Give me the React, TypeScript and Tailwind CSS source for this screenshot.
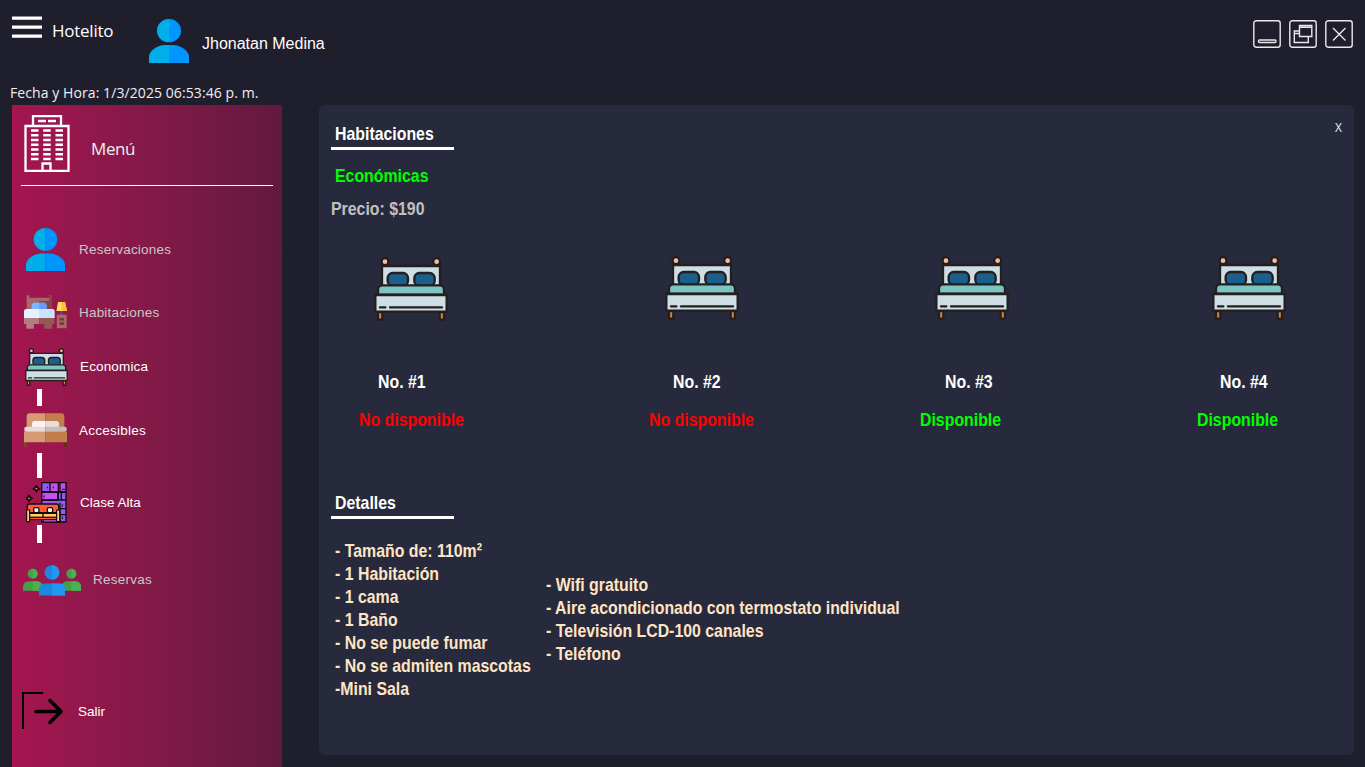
import type { ReactNode } from "react";

const narrow = "w-max origin-left scale-x-[0.835] font-['Liberation_Sans',Arial,sans-serif] font-bold text-[19px] leading-[23px] whitespace-pre";

function UserIcon({ className }: { className: string }) {
  return (
    <svg viewBox="0 0 116 132" preserveAspectRatio="none" className={className}>
      <path d="M58 0a35 35 0 0 0 0 70z" fill="#00aeea" />
      <path d="M58 0a35 35 0 0 1 0 70z" fill="#0095ff" />
      <path d="M58 78H46C24 78 0 96 0 113v19h58z" fill="#00aeea" />
      <path d="M58 78h12c22 0 46 18 46 35v19H58z" fill="#0095ff" />
    </svg>
  );
}

function BedIcon({ className }: { className: string }) {
  return (
    <svg viewBox="0 0 222 192" preserveAspectRatio="none" className={className}>
      <g stroke="#231f20" strokeWidth="7">
        <path d="M24 88V27h174v61z" fill="#cfdde5" />
        <circle cx="33" cy="14" r="10.500" fill="#f9b99a" />
        <circle cx="188" cy="14" r="10.500" fill="#f9b99a" />
        <rect x="41" y="48" width="61" height="39" rx="15" fill="#1b5f8c" />
        <rect x="121" y="48" width="61" height="39" rx="15" fill="#1b5f8c" />
        <path d="M12 113V98q0-13 13-13h172q13 0 13 13v15z" fill="#7cc5c3" />
        <path d="M12 165h13v23H12zM197 165h13v23h-13z" fill="#d9853b" />
        <path d="M4 114h214v50H4z" fill="#cfdde5" />
        <path d="M18 151h16M48 151h156" strokeLinecap="round" />
      </g>
    </svg>
  );
}

function BuildingIcon() {
  return (
    <svg viewBox="0 0 46 57" className="h-[57px] w-[46px]" fill="none" stroke="#fff" strokeWidth="2.300">
      <path d="M9 11V1.200h28V11M1.500 11h43v45h-43zM18.500 56v-7.500h8V56" />
      <path d="M14 6h8M24 6h8" />
      {[15.5, 20.2, 25, 29.7, 34.5, 39.2, 44].map((y) => (
        <path key={y} d={`M7 ${y}h7.500M19.200 ${y}h7.500M31.500 ${y}h7.500`} strokeWidth="2.600" />
      ))}
    </svg>
  );
}

function BedroomIcon() {
  return (
    <svg viewBox="0 0 130 102" className="h-[34px] w-[43px]">
      <path d="M8 0h8v10h60V0h7v50H8z" fill="#a56a6a" />
      <path d="M46 16h30V0h7v50H46z" fill="#824444" />
      <path d="M16 8h60v9H16z" fill="#a56a6a" />
      <path d="M23 42V32q0-9 9-9h27q9 0 9 9v10z" fill="#80b5ff" />
      <path d="M46 23h13q9 0 9 9v10H46z" fill="#639cff" />
      <path d="M0 69V48q0-6 7-6h78q7 0 7 6v21z" fill="#e6f1ff" />
      <path d="M46 42h39q7 0 7 6v21H46z" fill="#cbe2ff" />
      <path d="M0 69h46v18H30v15H7V87H0z" fill="#b47d7d" />
      <path d="M46 69h46v18h-7v15H61V87H46z" fill="#965757" />
      <path d="M103 21h21l6 27H98z" fill="#ffe05c" />
      <path d="M114 21h10l6 27h-16z" fill="#fdbf3c" />
      <path d="M111 48h6v12h-6z" fill="#435b91" />
      <path d="M99 59h30v41H99z" fill="#a56a6a" />
      <path d="M107 69h14v8h-14zM107 82h14v8h-14z" fill="#763c3c" />
    </svg>
  );
}

function WoodBedIcon() {
  return (
    <svg viewBox="0 0 130 102" className="h-[34px] w-[43px]">
      <path d="M0 86h8v16H0z" fill="#7c4824" />
      <path d="M122 86h8v16h-8z" fill="#5e3015" />
      <path d="M8 42V10Q8 0 18 0h47v42z" fill="#d49b74" />
      <path d="M65 0h47q10 0 10 10v32H65z" fill="#c27f4b" />
      <path d="M24 42V32q0-8 8-8h33v18z" fill="#fff3f0" />
      <path d="M65 24h33q8 0 8 8v10H65z" fill="#ebdcd9" />
      <path d="M0 55h65v33H0z" fill="#d49b74" />
      <path d="M65 55h65v33H65z" fill="#c27f4b" />
      <path d="M65 41H8a7 7 0 0 0 0 15h57z" fill="#e8dcda" />
      <path d="M65 41h57a7 7 0 0 1 0 15H65z" fill="#c9bdbb" />
    </svg>
  );
}

function SofaIcon() {
  return (
    <svg viewBox="0 0 123 123" className="h-[41px] w-[41px]">
      <g stroke="#120b14" strokeWidth="4" strokeLinejoin="round">
        <path d="M47 2h73v118H47z" fill="#8d5cf0" />
        <path d="M47 30h48v24H47z" fill="#c84ff0" />
        <path d="M72 2h25v28H72zM102 2h18v28h-18z" fill="#c84ff0" />
        <path d="M47 30h73M47 54h73M97 30v24M106 30v24M102 80h18M102 98h18M102 62v58" fill="none" />
        <path d="M64 14v5M82 14v5M108 22h9M54 40v7M109 67v7M109 104v7" strokeWidth="3" />
        <path d="M52 112h50v8H52z" fill="#c84ff0" strokeWidth="3" />
        <path d="M4 72q0-6 6-6h82q6 0 6 6v20H4z" fill="#ff5b35" />
        <path d="M10 94h82v12H10z" fill="#ffd066" />
        <path d="M10 106h82v7H10z" fill="#ff5b35" strokeWidth="3" />
        <path d="M2 84h9v35H2zM92 84h9v35h-9z" fill="#ffd27b" strokeWidth="3.500" />
        <path d="M51 94v12" />
        <rect x="23" y="77" width="16" height="15" rx="5" fill="#fff0e6" />
        <rect x="64" y="77" width="16" height="15" rx="5" fill="#fff0e6" />
        <path d="M31 11l3 6 6 3-6 3-3 6-3-6-6-3 6-3zM9 40l3 6 6 3-6 3-3 6-3-6-6-3 6-3z" fill="#ffce55" strokeWidth="5" />
      </g>
    </svg>
  );
}

function GroupIcon() {
  return (
    <svg viewBox="0 0 174 92" className="h-[31px] w-[58px]">
      <circle cx="29" cy="26" r="15" fill="#43a047" />
      <path d="M29 11a15 15 0 0 1 0 30z" fill="#4caf50" />
      <path d="M0 77V66q0-18 18-18h22q14 0 18 12v17z" fill="#43a047" />
      <path d="M29 48h11q14 0 18 12v17H29z" fill="#4caf50" />
      <circle cx="145" cy="26" r="15" fill="#43a047" />
      <path d="M145 11a15 15 0 0 1 0 30z" fill="#4caf50" />
      <path d="M116 77V60q4-12 18-12h22q18 0 18 18v11z" fill="#43a047" />
      <path d="M145 48h11q18 0 18 18v11h-29z" fill="#4caf50" />
      <circle cx="87" cy="22" r="22" fill="#1e88dc" />
      <path d="M87 0a22 22 0 0 1 0 44z" fill="#2196f3" />
      <path d="M48 91V73q0-18 18-18h42q18 0 18 18v18z" fill="#1e88dc" />
      <path d="M87 55h21q18 0 18 18v18H87z" fill="#2196f3" />
    </svg>
  );
}

function ExitIcon() {
  return (
    <svg viewBox="0 0 41 37" className="h-[37px] w-[41px]" fill="none" stroke="#000">
      <path d="M1 37V1h20" strokeWidth="2" />
      <path d="M14 19.500h25M28 8.500l11 11-11 11" strokeWidth="3.600" strokeLinecap="round" strokeLinejoin="round" />
    </svg>
  );
}

function WindowButton({ children }: { children: ReactNode }) {
  return (
    <button className="h-7 w-7">
      <svg viewBox="0 0 28 28" className="h-7 w-7" fill="none" stroke="#e8e8ec" strokeWidth="1.400">
        <rect x="0.800" y="0.800" width="26.400" height="26.400" rx="2.500" />
        {children}
      </svg>
    </button>
  );
}

function MenuItem({ icon, label, row, text }: { icon: ReactNode; label: string; row: string; text: string }) {
  return (
    <div className={`flex shrink-0 items-center ${row}`}>
      {icon}
      <span className={`font-['Liberation_Sans',sans-serif] text-[13.500px] leading-4 ${text}`}>{label}</span>
    </div>
  );
}

function Connector({ className }: { className: string }) {
  return <div className={`ml-[25px] w-[5px] shrink-0 bg-white ${className}`} />;
}

const rooms = [
  { name: "No. #1", free: false, col: "w-[290px]", bed: "ml-[15px] mt-px w-[74px]", label: "ml-[19px]" },
  { name: "No. #2", free: false, col: "w-[271px]", bed: "ml-[16px] w-[74px]", label: "ml-[24px]" },
  { name: "No. #3", free: true, col: "w-[277px]", bed: "ml-[15px] w-[74px]", label: "ml-[25px]" },
  { name: "No. #4", free: true, col: "w-[120px]", bed: "ml-[15px] w-[74px]", label: "ml-[23px]" },
];

const details = ["- Tamaño de: 110m²", "- 1 Habitación", "- 1 cama", "- 1 Baño", "- No se puede fumar", "- No se admiten mascotas", "-Mini Sala"];
const services = ["- Wifi gratuito", "- Aire acondicionado con termostato individual", "- Televisión LCD-100 canales", "- Teléfono"];

function Sidebar() {
  return (
    <aside className="ml-3 flex h-[662px] w-[270px] shrink-0 flex-col bg-linear-to-r from-[#a51550] to-[#63193e]">
      <div className="flex h-20 shrink-0 pl-3 pt-[10px]">
        <BuildingIcon />
        <span className="ml-[21px] mt-[22px] font-['Open_Sans',sans-serif] text-[17px] leading-6 tracking-[-0.4px] text-[#eee]">Menú</span>
      </div>
      <div className="ml-[9px] h-px w-[252px] shrink-0 bg-white" />
      <MenuItem icon={<UserIcon className="h-[43px] w-[39px]" />} label="Reservaciones" row="mt-[42px] h-[43px] pl-[14px]" text="ml-[14px] tracking-[0.23px] text-[#c8c8c8]" />
      <MenuItem icon={<BedroomIcon />} label="Habitaciones" row="mt-6 h-[34px] pl-3" text="ml-3 mt-[2px] tracking-[0.2px] text-[#c8c8c8]" />
      <MenuItem icon={<BedIcon className="h-[38px] w-[43px]" />} label="Economica" row="mt-[19px] h-[38px] pl-[13px]" text="ml-3 tracking-[0.15px] text-white" />
      <Connector className="mt-[3px] h-[17px]" />
      <MenuItem icon={<WoodBedIcon />} label="Accesibles" row="mt-[7px] h-[34px] pl-3" text="ml-3 mt-[2px] tracking-[0.25px] text-white" />
      <Connector className="mt-[6px] h-[25px]" />
      <MenuItem icon={<SofaIcon />} label="Clase Alta" row="mt-1 h-[41px] pl-[14px]" text="ml-[13px] text-white" />
      <Connector className="mt-[2px] h-[18px]" />
      <MenuItem icon={<GroupIcon />} label="Reservas" row="mt-[22px] h-[31px] pl-[11px]" text="ml-3 mb-[2px] tracking-[0.25px] text-[#c8c8c8]" />
      <MenuItem icon={<ExitIcon />} label="Salir" row="mt-24 h-[37px] pl-[10px]" text="ml-[15px] mt-[2px] text-white" />
    </aside>
  );
}

function RoomsPanel() {
  return (
    <main className="ml-[37px] flex h-[650px] w-[1035px] shrink-0 flex-col rounded-md bg-[#272a3c]">
      <div className="flex h-[42px] shrink-0 items-start justify-between pl-4 pr-3 pt-[17px]">
        <h1 className={`${narrow} text-white`}>Habitaciones</h1>
        <button className="mt-[-2px] font-['Open_Sans',sans-serif] text-[12px] leading-[16px] text-[#eee]">X</button>
      </div>
      <div className="ml-3 h-[3px] w-[123px] shrink-0 bg-white" />
      <h2 className={`${narrow} ml-4 mt-[14px] text-[#00ff00]`}>Económicas</h2>
      <p className={`${narrow} ml-3 mt-[10px] text-[#c0c0c0]`}>Precio: $190</p>
      <div className="mt-9 flex h-[176px] shrink-0 pl-10">
        {rooms.map((room) => (
          <section key={room.name} className={`flex shrink-0 flex-col ${room.col}`}>
            <div className="h-[114px]">
              <BedIcon className={`h-16 ${room.bed}`} />
            </div>
            <span className={`${narrow} text-white ${room.label}`}>{room.name}</span>
            <span className={`${narrow} mt-[15px] ${room.free ? "text-[#00ff00]" : "text-[#ff0000]"}`}>
              {room.free ? "Disponible" : "No disponible"}
            </span>
          </section>
        ))}
      </div>
      <h2 className={`${narrow} ml-4 mt-[59px] text-white`}>Detalles</h2>
      <div className="ml-3 mt-[2px] h-[3px] w-[123px] shrink-0 bg-white" />
      <div className="mt-5 flex pl-4">
        <ul className="w-[211px]">
          {details.map((d) => (
            <li key={d} className={`${narrow} text-[#ffe4c4]`}>{d}</li>
          ))}
        </ul>
        <ul className="mt-[34px]">
          {services.map((s) => (
            <li key={s} className={`${narrow} text-[#ffe4c4]`}>{s}</li>
          ))}
        </ul>
      </div>
    </main>
  );
}

export default function App() {
  return (
    <div className="flex h-[767px] w-[1365px] flex-col overflow-hidden bg-[#1f1e2d]">
      <header className="flex h-20 shrink-0 items-start pl-3 pr-3 text-white">
        <button className="mt-4 flex h-[22px] w-[30px] flex-col justify-between">
          <span className="h-1 w-full border-b border-t border-b-[#c9c9cd] border-t-[#8c8b93] bg-white" />
          <span className="h-1 w-full border-b border-t border-b-[#c9c9cd] border-t-[#8c8b93] bg-white" />
          <span className="h-1 w-full border-b border-t border-b-[#c9c9cd] border-t-[#8c8b93] bg-white" />
        </button>
        <span className="ml-[10px] mt-[19px] w-[97px] font-['Open_Sans',sans-serif] text-[17px] leading-6 tracking-[-0.25px]">Hotelito</span>
        <UserIcon className="mt-[19px] h-11 w-10" />
        <span className="ml-[13px] mt-[34px] font-['Liberation_Sans',sans-serif] text-[16px] leading-5">Jhonatan Medina</span>
        <div className="ml-auto mt-5 flex gap-2">
          <WindowButton>
            <rect x="5.500" y="20" width="17.500" height="2.500" rx="1" />
          </WindowButton>
          <WindowButton>
            <path d="M10.500 5.500h12.300v11H10.500zM10.500 7.300h12.300M10.500 11H5.300v11.500h14V17M5.300 13.500h5" />
          </WindowButton>
          <WindowButton>
            <path d="M8 8l12.500 12.500M20.500 8L8 20.500" />
          </WindowButton>
        </div>
      </header>
      <div className="h-[25px] shrink-0 pl-[10px] pt-[2px] font-['Open_Sans',sans-serif] text-[14px] leading-[22px] tracking-[0.08px] text-[#f0f0f0]">
        Fecha y Hora: 1/3/2025 06:53:46 p. m.
      </div>
      <div className="flex">
        <Sidebar />
        <RoomsPanel />
      </div>
    </div>
  );
}
